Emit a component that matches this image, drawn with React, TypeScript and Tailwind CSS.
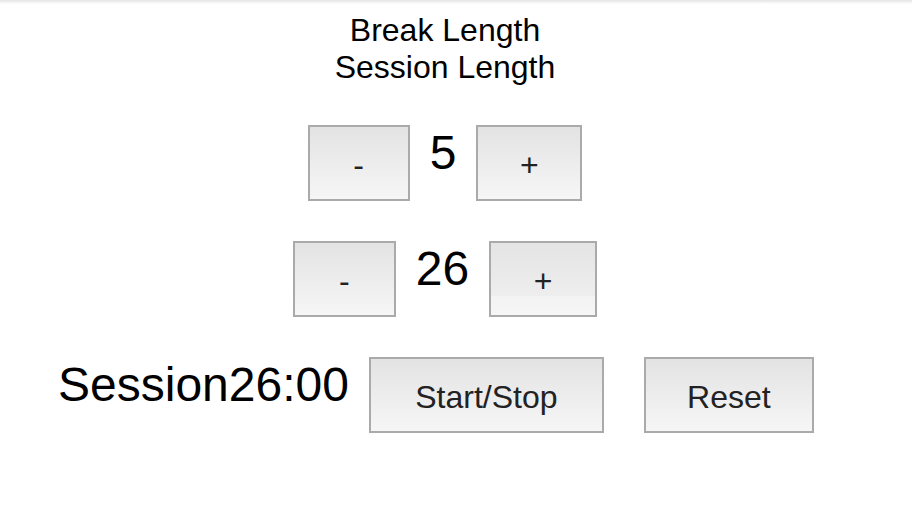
import React from 'react';

interface ClockButtonProps {
  label: string;
  width: string;
  band?: boolean;
}

// grey native-looking button as rendered in the screenshot
function ClockButton({ label, width, band }: ClockButtonProps) {
  return (
    <button
      className={`${width} h-[76px] shrink-0 border-2 border-[#aaaaaa] pt-[4px] text-[32px] leading-[normal] text-[#222222] flex items-center justify-center ${
        band
          ? 'bg-[linear-gradient(to_bottom,#e4e4e4_0%,#eeeeee_74%,#f3f3f3_74%,#f6f6f6_100%)]'
          : 'bg-gradient-to-b from-[#e3e3e3] to-[#f6f6f6]'
      }`}>
      {label}
    </button>
  );
}

export default function App() {
  const breakLength = 5;
  const sessionLength = 26;

  return (
    <div className="w-[912px] h-[532px] bg-white font-['Liberation_Sans',Arial,sans-serif] text-black">
      {/* top edge shadow */}
      <div className="h-[4px] bg-gradient-to-b from-[#e4e4e4] to-white" />

      <div className="w-[890px] text-center">
        <div className="mt-[8px] text-[32px] leading-[normal]">
          <div id="break-label">Break Length</div>
          <div id="session-label">Session Length</div>
        </div>

        {/* Break controls */}
        <div className="mt-[39px] flex items-start justify-center gap-5">
          <ClockButton label="-" width="w-[102px]" />
          <div className="text-[48px] leading-[normal]">{breakLength}</div>
          <ClockButton label="+" width="w-[106px]" />
        </div>

        {/* Session controls */}
        <div className="mt-[40px] flex items-start justify-center gap-5">
          <ClockButton label="-" width="w-[103px]" />
          <div className="text-[48px] leading-[normal]">{sessionLength}</div>
          <ClockButton label="+" width="w-[108px]" band />
        </div>
      </div>

      {/* Timer row */}
      <div className="mt-[40px] pl-[58px] flex items-start gap-5">
        <div className="text-[48px] leading-[normal] whitespace-nowrap">
          <span>Session</span>
          <span>26:00</span>
        </div>
        <ClockButton label="Start/Stop" width="w-[235px]" />
        <div className="ml-5">
          <ClockButton label="Reset" width="w-[170px]" />
        </div>
      </div>
    </div>
  );
}
